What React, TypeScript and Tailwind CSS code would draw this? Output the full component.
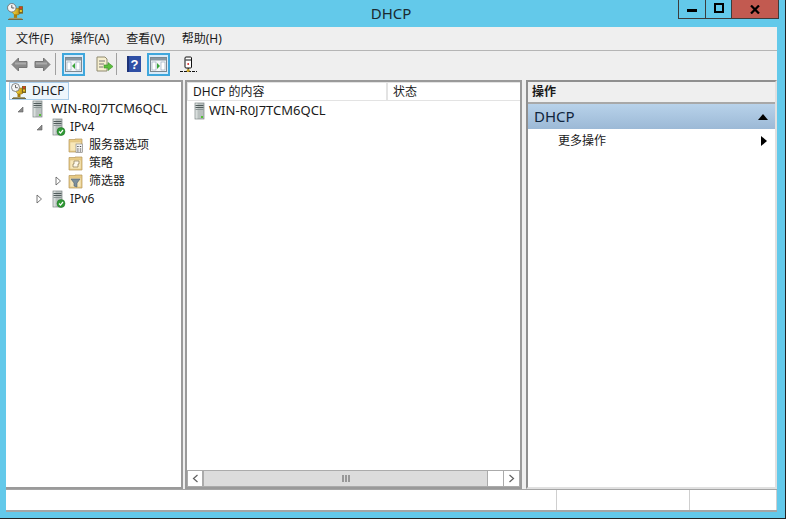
const font = { fontFamily: '"Noto Sans", "Noto Sans CJK SC", sans-serif' };

function AppIcon({ size = 20, id }: { size?: number; id: string }) {
  return (
    <svg width={size} height={size} viewBox="0 0 16 16" className="shrink-0">
      <defs>
        <linearGradient id={id} x1="0" x2="1" y1="0" y2="0">
          <stop offset="0" stopColor="#f4d63a" />
          <stop offset="1" stopColor="#b98a12" />
        </linearGradient>
      </defs>
      <rect x="2" y="14" width="12" height="2" fill="#a59c6e" />
      <rect x="1" y="15" width="14" height="1" fill="#6f6a48" />
      <rect x="6.5" y="10" width="3" height="4" fill="#a8800f" />
      <path d="M5 5h8v4l-2 2H7L5 9z" fill={`url(#${id})`} stroke="#8a6a0c" strokeWidth="0.5" />
      <rect x="11" y="3" width="4" height="7" fill="#7a6420" />
      <rect x="12" y="3.5" width="2" height="2" fill="#e23a22" />
      <rect x="12" y="6.5" width="2" height="2" fill="#f0c828" />
      <circle cx="4.5" cy="4.5" r="4" fill="#f6f6f6" stroke="#6a6a6a" strokeWidth="0.8" />
      <path d="M4.5 2v2.7h2.3" fill="none" stroke="#444" strokeWidth="0.8" />
    </svg>
  );
}

function ServerIcon({ check }: { check?: boolean }) {
  return (
    <svg width="16" height="18" viewBox="0 0 16 18" className="shrink-0">
      <rect x="3" y="1" width="9" height="16" fill="#b9c0bf" stroke="#7b8484" strokeWidth="0.7" />
      <rect x="3.5" y="1.5" width="2" height="15" fill="#d8dddc" />
      <path d="M3.5 3.5h8M3.5 5.5h8" stroke="#515c5c" strokeWidth="1" />
      <path d="M3.5 7.5h8" stroke="#8a9494" strokeWidth="1" />
      {check ? (
        <>
          <circle cx="11" cy="13.5" r="4" fill="#2f9a35" stroke="#1f6f25" strokeWidth="0.5" />
          <path d="M9 13.5l1.5 1.6L13 12" fill="none" stroke="#fff" strokeWidth="1.2" />
        </>
      ) : (
        <rect x="9" y="14" width="2" height="2" fill="#54c234" />
      )}
    </svg>
  );
}

function FolderIcon({ kind }: { kind: "options" | "policy" | "filter" }) {
  return (
    <svg width="15" height="15" viewBox="0 0 15 15" className="shrink-0">
      <path d="M1 3V1.5h6V1h7v13H1z" fill="#e8cb86" stroke="#b4975a" strokeWidth="0.7" />
      <rect x="2" y="4" width="11" height="9" fill="#f8e7b8" stroke="#d8bd7e" strokeWidth="0.5" />
      {kind === "options" && (
        <>
          <rect x="8" y="6" width="6.5" height="8.5" fill="#f4f4f4" stroke="#7d7d7d" strokeWidth="0.6" />
          <path d="M9.2 8.5h1.4M11.8 8.5h1.4M9.2 11h1.4M11.8 11h1.4M9.2 13h1.4M11.8 13h1.4" stroke="#4a4a4a" strokeWidth="1" />
        </>
      )}
      {kind === "policy" && <path d="M6 5h5v3h-1v3H5V8h1z" fill="#fdf8ea" stroke="#8a7a50" strokeWidth="0.7" />}
      {kind === "filter" && <path d="M3 5h9L9 9v4l-3-1V9z" fill="#7d8f9c" stroke="#50606c" strokeWidth="0.6" />}
    </svg>
  );
}

function Open() {
  return (
    <svg width="7" height="7" viewBox="0 0 7 7" className="shrink-0">
      <path d="M6 1v5H1z" fill="#8a8a8a" stroke="#5a5a5a" strokeWidth="0.6" />
    </svg>
  );
}

function Closed() {
  return (
    <svg width="7" height="10" viewBox="0 0 7 10" className="shrink-0">
      <path d="M1 1l4.5 4L1 9z" fill="#fff" stroke="#555" strokeWidth="0.8" />
    </svg>
  );
}

function Arrow({ dir }: { dir: "left" | "right" }) {
  return (
    <svg width="17" height="15" viewBox="0 0 17 15">
      <path
        d={dir === "left" ? "M1 7.5L7.5 1v3.5H16v6H7.5V14z" : "M16 7.5L9.5 1v3.5H1v6h8.5V14z"}
        fill="#8a8a8a"
        stroke="#767676"
      />
      <path d={dir === "left" ? "M4 6.5h11" : "M2 6.5h11"} stroke="#ababab" strokeWidth="2" />
    </svg>
  );
}

function PaneIcon({ side }: { side: "left" | "right" }) {
  return (
    <svg width="17" height="15" viewBox="0 0 17 15">
      <rect x="0.5" y="0.5" width="16" height="14" fill="#f4f6f8" stroke="#7c8890" />
      <rect x="1" y="1" width="15" height="2.5" fill="#8a97a1" />
      <rect x="2" y="5" width="4" height="8" fill="#fff" stroke="#8ca0b5" strokeWidth="0.6" />
      <rect x="11" y="5" width="4" height="8" fill="#fff" stroke="#8ca0b5" strokeWidth="0.6" />
      <path d={side === "left" ? "M10 6v6L7 9z" : "M7 6v6l3-3z"} fill="#3aa63a" />
    </svg>
  );
}

function ToolBtn({ active, children }: { active?: boolean; children: React.ReactNode }) {
  return (
    <div
      className={`flex h-[23px] w-[23px] items-center justify-center border-2 ${
        active ? "border-[#3fa7dc] bg-[#d9ebf9]" : "border-transparent"
      }`}
    >
      {children}
    </div>
  );
}

function TreeRow({
  indent,
  toggle,
  icon,
  label,
  gap,
  size = "text-[12px]",
}: {
  indent: string;
  toggle?: React.ReactNode;
  icon: React.ReactNode;
  label: string;
  gap: string;
  size?: string;
}) {
  return (
    <div className={`flex h-[18px] items-center ${indent}`}>
      <div className="flex w-[11px] shrink-0 items-center justify-center">{toggle}</div>
      <div className={`flex items-center ${gap}`}>
        {icon}
        <span className={`whitespace-nowrap text-[#1a1a1a] ${size}`}>{label}</span>
      </div>
    </div>
  );
}

export default function App() {
  return (
    <div
      style={font}
      className="flex h-[519px] w-[786px] flex-col overflow-hidden border-r border-b border-[#222] bg-[#63c9ea] text-[#1a1a1a]"
    >
      {/* Title bar */}
      <div className="relative flex h-[27px] shrink-0 items-center justify-center">
        <div className="absolute top-[3px] left-[7px]">
          <AppIcon size={17} id="appTitle" />
        </div>
        <span className="mr-[3px] text-[15px] text-[#1a2a30]">DHCP</span>
        <div className="absolute top-0 right-[6px] flex h-[19px] border border-t-0 border-[#3c3c3c]">
          <div className="flex w-[27px] items-center justify-center border-r border-[#3c3c3c]">
            <div className="mt-[3px] h-[3px] w-[10px] bg-black" />
          </div>
          <div className="flex w-[26px] items-center justify-center border-r border-[#3c3c3c]">
            <div className="mb-[3px] h-[10px] w-[10px] border-2 border-black" />
          </div>
          <div className="flex w-[46px] items-center justify-center bg-[#c25a50]">
            <svg width="10" height="9" viewBox="0 0 10 9">
              <path d="M1 0.5l8 8M9 0.5l-8 8" stroke="#000" strokeWidth="2.2" />
            </svg>
          </div>
        </div>
      </div>

      <div className="flex min-h-0 flex-1 flex-col pr-[8px] pb-[6px] pl-[6px]">
        {/* Menu bar */}
        <div className="flex h-[24px] shrink-0 items-center gap-[17px] border-b border-[#b5b5b5] bg-[#efefef] pl-[10px] text-[12px]">
          <span>文件(F)</span>
          <span>操作(A)</span>
          <span>查看(V)</span>
          <span>帮助(H)</span>
        </div>

        {/* Toolbar */}
        <div className="flex h-[29px] shrink-0 items-center bg-[#efefef] pb-[3px] pl-[4px]">
          <div className="flex w-[18px] justify-center">
            <Arrow dir="left" />
          </div>
          <div className="ml-[5px] flex w-[18px] justify-center">
            <Arrow dir="right" />
          </div>
          <div className="mr-[6px] ml-[4px] h-[22px] w-px bg-[#a0a0a0]" />
          <ToolBtn active>
            <PaneIcon side="left" />
          </ToolBtn>
          <div className="ml-[8px]">
            <ToolBtn>
              <svg width="17" height="16" viewBox="0 0 17 16">
                <path d="M1 1h8l2 2v12H1z" fill="#f6efcf" stroke="#8f8a70" />
                <path d="M3 5h6M3 8h5M3 11h4" stroke="#777" />
                <path d="M8 9h4V6.5l5 4-5 4V12H8z" fill="#5cbf3c" stroke="#3a8f2a" strokeWidth="0.6" />
              </svg>
            </ToolBtn>
          </div>
          <div className="mr-[5px] h-[22px] w-px bg-[#a0a0a0]" />
          <ToolBtn>
            <svg width="14" height="16" viewBox="0 0 14 16" className="shrink-0">
              <rect width="14" height="16" fill="#2f4fa5" />
              <rect x="0" y="0" width="2" height="16" fill="#1d3378" />
              <text x="7.5" y="13" fontSize="13" fontWeight="700" fill="#fff" textAnchor="middle" fontFamily="Liberation Sans">
                ?
              </text>
            </svg>
          </ToolBtn>
          <div className="ml-[2px]">
            <ToolBtn active>
              <PaneIcon side="right" />
            </ToolBtn>
          </div>
          <div className="ml-[7px]">
            <ToolBtn>
              <svg width="17" height="17" viewBox="0 0 17 17" className="shrink-0">
                <rect x="5" y="1" width="6.5" height="11" rx="1" fill="#fff" stroke="#111" />
                <path d="M5.5 4h5.5" stroke="#111" />
                <circle cx="8.2" cy="8" r="0.9" fill="#d02020" />
                <path d="M8.2 12v3" stroke="#111" />
                <path d="M0 15.5h17" stroke="#111" strokeDasharray="3 1" />
                <circle cx="8.2" cy="14.5" r="1.6" fill="#c8a020" />
              </svg>
            </ToolBtn>
          </div>
        </div>

        {/* Panes */}
        <div className="flex min-h-0 flex-1 gap-[2px] bg-[#efefef]">
          {/* Tree */}
          <div className="w-[177px] shrink-0 border-t-2 border-r-2 border-b-2 border-[#9a9a9a] bg-white">
            <div className="ml-[3px] flex h-[18px] w-[60px] items-center gap-[5px] border border-[#a9cdea] bg-[#eef6fc] pl-px">
              <AppIcon size={16} id="appTree" />
              <span className="text-[12px]">DHCP</span>
            </div>
            <TreeRow indent="pl-[9px]" toggle={<Open />} icon={<ServerIcon />} gap="gap-[5px] ml-[4px]" label="WIN-R0J7TCM6QCL" size="text-[13px]" />
            <TreeRow indent="pl-[28px]" toggle={<Open />} icon={<ServerIcon check />} gap="gap-[4px] ml-[5px]" label="IPv4" />
            <TreeRow indent="pl-[47px]" icon={<FolderIcon kind="options" />} gap="gap-[6px] ml-[4px]" label="服务器选项" />
            <TreeRow indent="pl-[47px]" icon={<FolderIcon kind="policy" />} gap="gap-[6px] ml-[4px]" label="策略" />
            <TreeRow indent="pl-[47px]" toggle={<Closed />} icon={<FolderIcon kind="filter" />} gap="gap-[6px] ml-[4px]" label="筛选器" />
            <TreeRow indent="pl-[28px]" toggle={<Closed />} icon={<ServerIcon check />} gap="gap-[4px] ml-[5px]" label="IPv6" />
          </div>

          {/* Content list */}
          <div className="flex w-[337px] shrink-0 flex-col border-2 border-[#9a9a9a] bg-white">
            <div className="flex h-[19px] shrink-0 border-t border-b border-l border-[#e3e3e3] text-[12px]">
              <div className="w-[200px] border-r-2 border-[#e3e3e3] pl-[5px] leading-[17px]">DHCP 的内容</div>
              <div className="flex-1 pl-[5px] leading-[17px]">状态</div>
            </div>
            <div className="flex h-[19px] shrink-0 items-center pl-[5px] text-[13px]">
              <ServerIcon />
              <span className="ml-[1px]">WIN-R0J7TCM6QCL</span>
            </div>
            <div className="flex-1" />
            {/* Horizontal scrollbar */}
            <div className="flex h-[17px] shrink-0 border border-[#ababab]">
              <div className="flex w-[16px] items-center justify-center border-r-2 border-[#ababab]">
                <svg width="7" height="9" viewBox="0 0 7 9">
                  <path d="M5.5 1L1.5 4.5l4 3.5" fill="none" stroke="#606060" strokeWidth="1.2" />
                </svg>
              </div>
              <div className="flex w-[283px] items-center justify-center bg-[#dcdcdc]">
                <svg width="8" height="7" viewBox="0 0 8 7">
                  <path d="M1 0v7M4 0v7M7 0v7" stroke="#555" />
                </svg>
              </div>
              <div className="w-[16px] border-l border-[#ababab]" />
              <div className="flex flex-1 items-center justify-center border-l border-[#ababab]">
                <svg width="7" height="9" viewBox="0 0 7 9">
                  <path d="M1.5 1l4 3.5-4 3.5" fill="none" stroke="#606060" strokeWidth="1.2" />
                </svg>
              </div>
            </div>
          </div>

          {/* Actions pane */}
          <div className="ml-[2px] flex min-w-0 flex-1 flex-col border-t-2 border-r-2 border-b-2 border-l-2 border-[#8f8f8f] border-r-[#e0e0e0] border-b-[#e0e0e0] bg-white">
            <div className="flex h-[22px] shrink-0 items-center border-b-2 border-[#a8a8a8] bg-[#efefef] pl-[4px] text-[12px] font-semibold">
              操作
            </div>
            <div className="flex h-[25px] shrink-0 items-center justify-between bg-gradient-to-b from-[#b8d2ea] to-[#9cb9d6] pr-[7px] pl-[6px]">
              <span className="text-[15px] text-[#10253c]">DHCP</span>
              <svg width="10" height="6" viewBox="0 0 10 6">
                <path d="M5 0l5 6H0z" fill="#000" />
              </svg>
            </div>
            <div className="flex h-[24px] shrink-0 items-center justify-between pr-[8px] pl-[30px] text-[12px]">
              <span>更多操作</span>
              <svg width="6" height="10" viewBox="0 0 6 10">
                <path d="M0 0l6 5-6 5z" fill="#000" />
              </svg>
            </div>
          </div>
        </div>

        {/* Status bar */}
        <div className="flex h-[23px] shrink-0 border-t border-b-2 border-[#a5a5a5] bg-white">
          <div className="w-[551px] border-r border-[#cfcfcf]" />
          <div className="w-[133px] border-r border-[#cfcfcf]" />
          <div className="flex-1 border-r border-[#cfcfcf]" />
        </div>
      </div>
    </div>
  );
}
